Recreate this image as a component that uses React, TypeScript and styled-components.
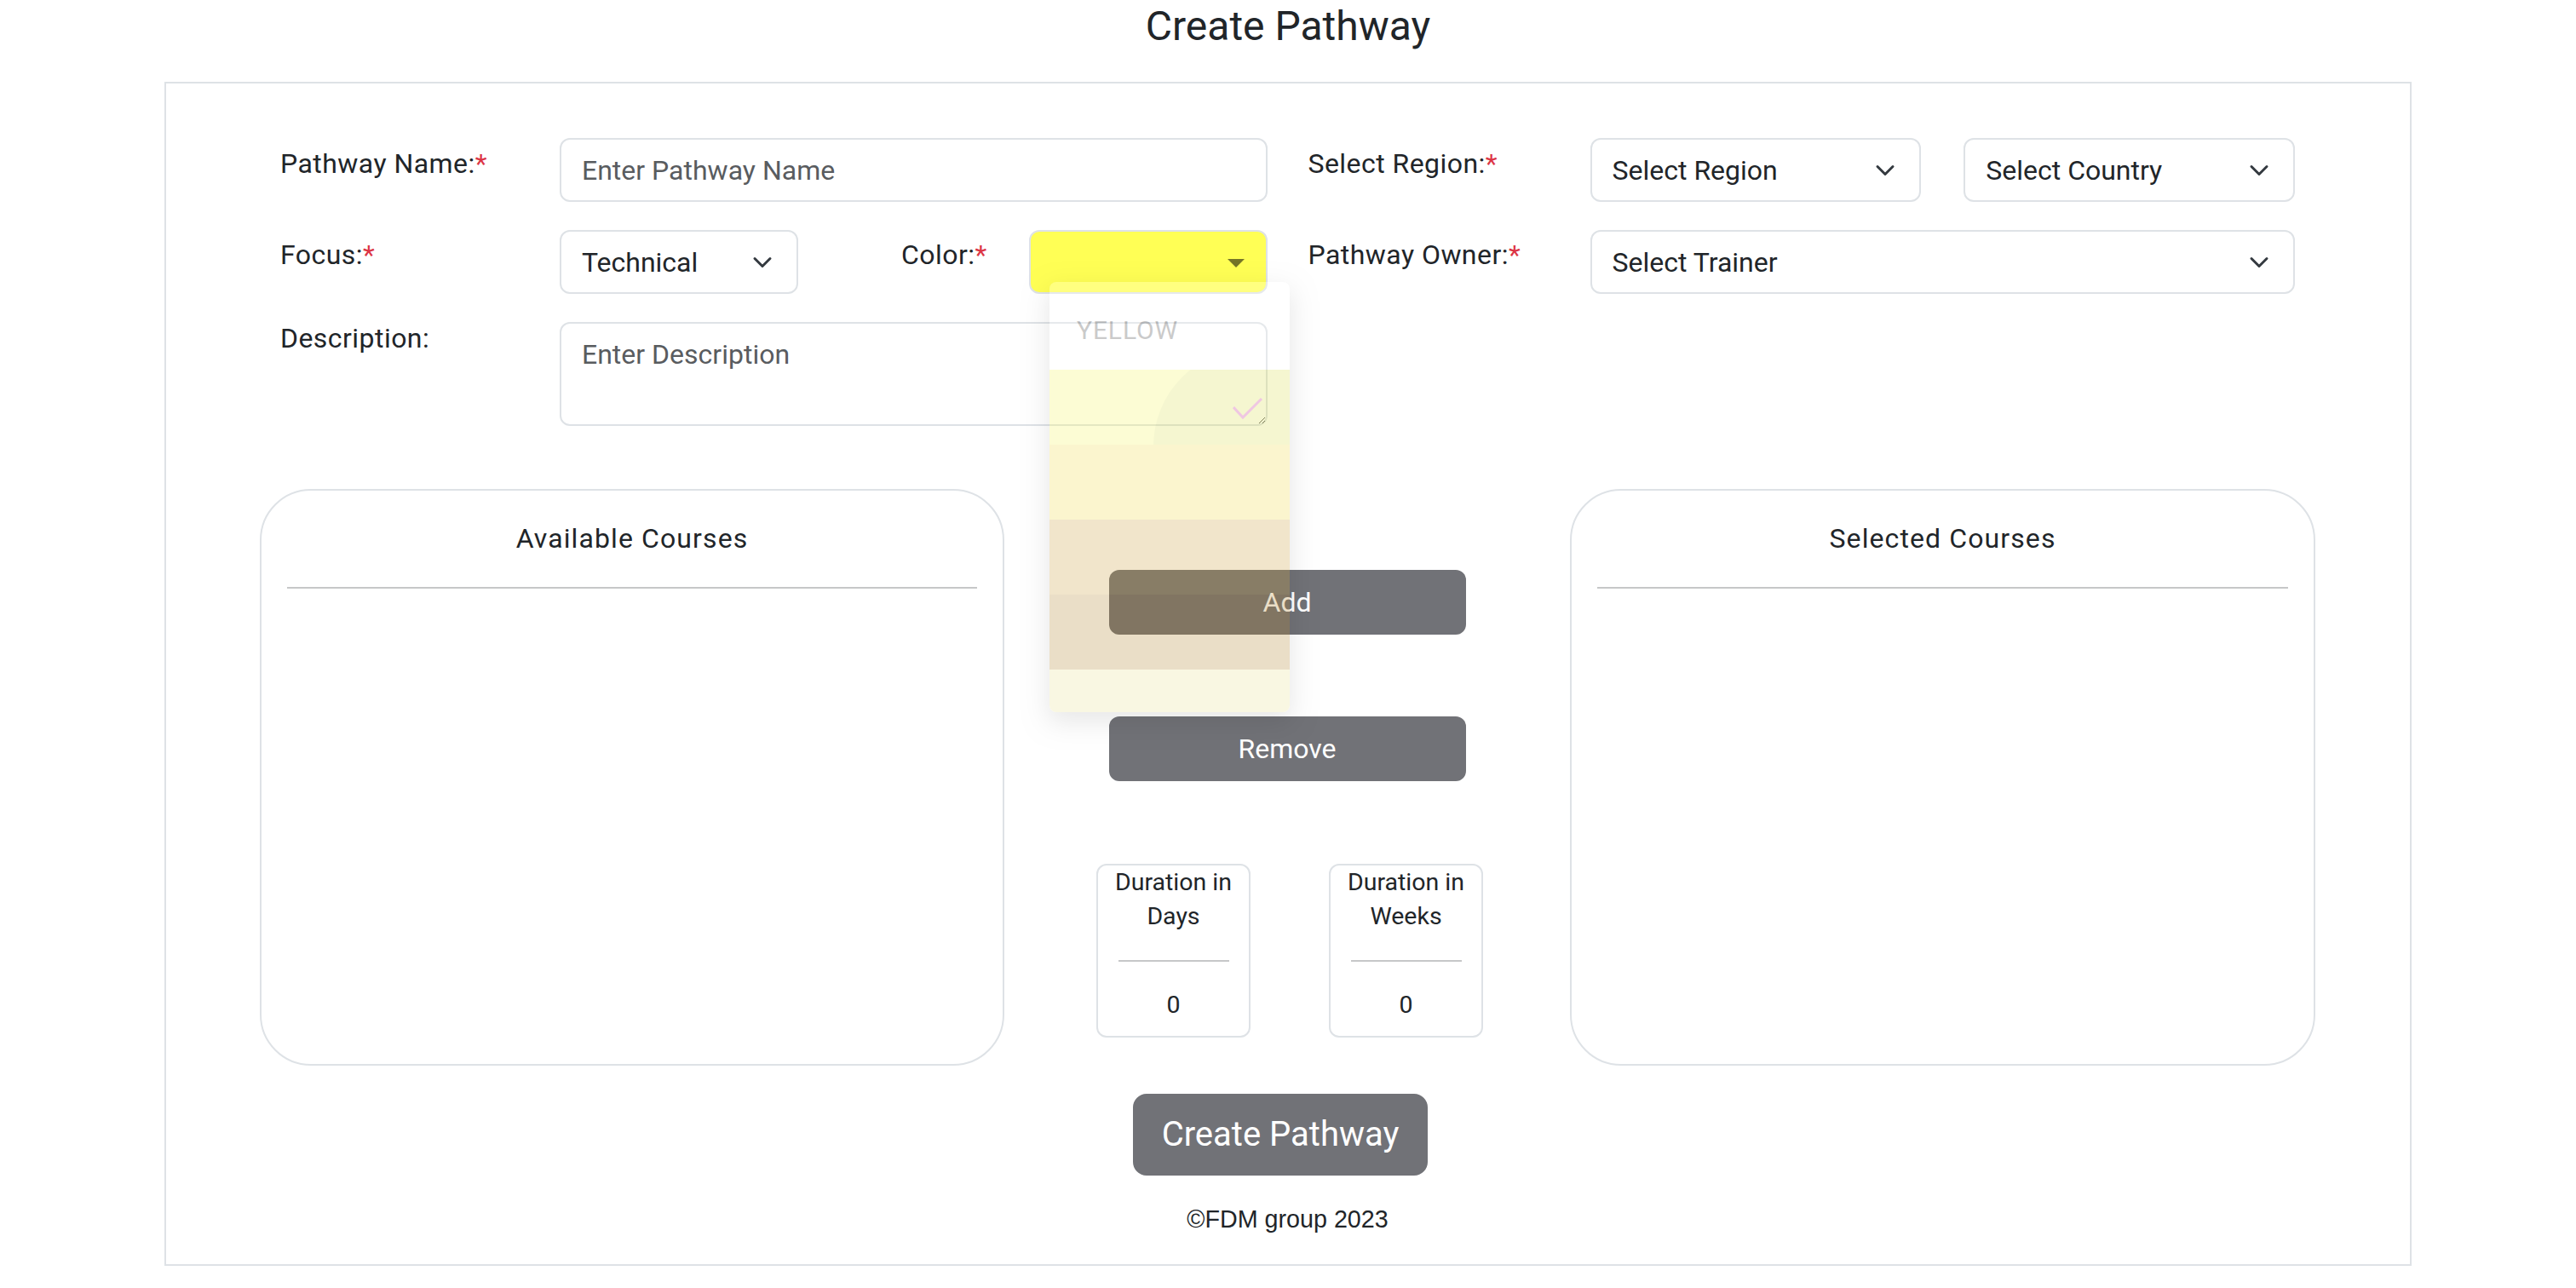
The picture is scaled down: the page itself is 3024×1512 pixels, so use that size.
import React from "react";
import styled, { createGlobalStyle } from "styled-components";

const GlobalStyle = createGlobalStyle`
  * { box-sizing: border-box; }
  html, body { margin: 0; padding: 0; background: #ffffff; }
  body {
    color: #212529;
    font-family: Roboto, "Liberation Sans", Arial, sans-serif;
  }
`;

const Page = styled.div`
  width: 3024px;
`;

const Title = styled.h1`
  margin: 2px 0 36px;
  font-size: 48px;
  line-height: 58px;
  font-weight: 400;
  text-align: center;
  color: #212529;
`;

const Card = styled.section`
  width: 2638px;
  margin: 0 auto;
  border: 2px solid #dee2e6;
  padding: 64px 135px 32px 134px;
  display: flex;
  flex-direction: column;
`;

const FormGrid = styled.div`
  display: grid;
  grid-template-columns: 1fr 1fr;
  column-gap: 48px;
  align-items: start;
`;

const FieldStack = styled.div`
  display: flex;
  flex-direction: column;
  gap: 33px;
`;

const FieldRow = styled.div`
  display: flex;
  align-items: flex-start;
`;

const Label = styled.label<{ $w: number; $offset: number; $ml?: number }>`
  flex: none;
  width: ${(p) => p.$w}px;
  margin-top: ${(p) => p.$offset}px;
  margin-left: ${(p) => p.$ml ?? 0}px;
  font-size: 32px;
  line-height: 48px;
  letter-spacing: 0.45px;
  color: #212529;
`;

const Req = styled.span`
  color: #dc3545;
`;

const TextInput = styled.input`
  flex: 1;
  min-width: 0;
  height: 75px;
  border: 2px solid #dee2e6;
  border-radius: 12px;
  padding: 0 24px;
  font-family: Roboto, sans-serif;
  font-size: 32px;
  color: #212529;
  background: #fff;
  outline: none;
  &::placeholder {
    color: #595c5f;
    opacity: 1;
  }
`;

const TextArea = styled.textarea`
  flex: 1;
  min-width: 0;
  height: 122px;
  border: 2px solid #dee2e6;
  border-radius: 12px;
  padding: 12px 24px;
  font-family: Roboto, sans-serif;
  font-size: 32px;
  line-height: 48px;
  color: #212529;
  background: #fff;
  outline: none;
  resize: vertical;
  &::placeholder {
    color: #595c5f;
    opacity: 1;
  }
`;

const SelectBox = styled.div<{ $w?: number }>`
  flex: ${(p) => (p.$w ? "none" : "1")};
  width: ${(p) => (p.$w ? `${p.$w}px` : "auto")};
  min-width: 0;
  height: 75px;
  border: 2px solid #dee2e6;
  border-radius: 12px;
  padding: 0 24px;
  display: flex;
  align-items: center;
  justify-content: space-between;
  font-size: 32px;
  color: #212529;
  background: #fff;
`;

const Chevron = styled.svg`
  flex: none;
  width: 32px;
  height: 24px;
`;

const PairGrid = styled.div`
  flex: 1;
  display: grid;
  grid-template-columns: 1fr 1fr;
  column-gap: 50px;
`;

const ColorWrap = styled.div`
  flex: 1;
  position: relative;
`;

const ColorSelect = styled.div`
  height: 75px;
  border: 2px solid #dee2e6;
  border-radius: 12px;
  background: #ffff55;
  display: flex;
  align-items: center;
  justify-content: flex-end;
  padding-right: 23px;
`;

const Caret = styled.svg`
  width: 48px;
  height: 48px;
  margin-right: -12px;
`;

const Menu = styled.ul`
  position: absolute;
  left: 24px;
  top: 61px;
  width: 282px;
  height: 505px;
  margin: 0;
  padding: 16px 0 0;
  list-style: none;
  background: #fff;
  border-radius: 8px;
  overflow: hidden;
  opacity: 0.254;
  box-shadow: 0 10px 30px 2px rgba(0, 0, 0, 0.35);
  z-index: 5;
`;

const MenuItem = styled.li<{ $bg: string; $h?: number }>`
  position: relative;
  height: ${(p) => p.$h ?? 88}px;
  background: ${(p) => p.$bg};
  padding: 0 32px;
  display: flex;
  align-items: center;
  overflow: hidden;
  font-size: 30px;
  letter-spacing: 0.9px;
  color: #333;
`;

const ItemText = styled.span`
  margin-top: -6px;
`;

const Ripple = styled.span`
  position: absolute;
  left: 122px;
  top: -25px;
  width: 230px;
  height: 230px;
  border-radius: 50%;
  background: rgba(110, 130, 10, 0.2);
`;

const Check = styled.svg`
  position: absolute;
  left: 215px;
  top: 32px;
  width: 36px;
  height: 27px;
`;

const Transfer = styled.div`
  display: grid;
  grid-template-columns: 874px 1fr 875px;
  margin: 74px -24px 0;
`;

const CoursePanel = styled.div`
  height: 677px;
  border: 2px solid #dee2e6;
  border-radius: 60px;
  padding: 32px 30px 0;
  display: flex;
  flex-direction: column;
`;

const PanelTitle = styled.h5`
  margin: 0;
  font-size: 32px;
  line-height: 48px;
  font-weight: 400;
  letter-spacing: 1.1px;
  text-align: center;
  color: #212529;
`;

const Rule = styled.hr<{ $w?: number; $m: number }>`
  margin: ${(p) => p.$m}px auto;
  width: ${(p) => (p.$w ? `${p.$w}px` : "100%")};
  border: 0;
  border-top: 2px solid #c6c7c8;
  opacity: 1;
`;

const Middle = styled.div`
  display: flex;
  flex-direction: column;
  align-items: center;
  padding-top: 95px;
`;

const ActionButton = styled.button<{ $mt?: number }>`
  width: 419px;
  height: 76px;
  margin-top: ${(p) => p.$mt ?? 0}px;
  border: none;
  border-radius: 12px;
  background: #717277;
  color: #fff;
  font-family: Roboto, sans-serif;
  font-size: 32px;
`;

const DurationRow = styled.div`
  display: flex;
  gap: 92px;
  margin-top: 97px;
  margin-left: 6px;
`;

const DurationBox = styled.div`
  width: 181px;
  height: 204px;
  border: 2px solid #dee2e6;
  border-radius: 12px;
  padding: 0 12px;
  text-align: center;
  font-size: 28.5px;
  line-height: 40px;
  color: #212529;
`;

const DurationHead = styled.div``;

const DurationValue = styled.div``;

const SubmitButton = styled.button`
  align-self: center;
  margin: 33px 17px 0 0;
  padding: 16px 32px;
  border: 2px solid #717277;
  border-radius: 16px;
  background: #717277;
  color: #fff;
  font-family: Roboto, sans-serif;
  font-size: 40px;
  line-height: 60px;
`;

const Footer = styled.footer`
  margin-top: 30px;
  text-align: center;
  font-family: "Liberation Sans", Arial, sans-serif;
  font-size: 28.7px;
  line-height: 42px;
  color: #212529;
`;

const ChevronIcon = () => (
  <Chevron viewBox="0 0 16 16" fill="none">
    <path d="m2 5 6 6 6-6" stroke="#343a40" strokeWidth="2" strokeLinecap="round" strokeLinejoin="round" />
  </Chevron>
);

const Select = ({ children, w }: { children: React.ReactNode; w?: number }) => (
  <SelectBox $w={w}>
    <span>{children}</span>
    <ChevronIcon />
  </SelectBox>
);

const menuColors = ["#f7f75a", "#f3dc42", "#cc9d36", "#b08126", "#ebe091"];

export default function App() {
  return (
    <Page>
      <GlobalStyle />
      <Title>Create Pathway</Title>
      <Card>
        <FormGrid>
          <FieldStack>
            <FieldRow>
              <Label $w={328} $offset={6}>
                Pathway Name:<Req>*</Req>
              </Label>
              <TextInput placeholder="Enter Pathway Name" />
            </FieldRow>
            <FieldRow>
              <Label $w={328} $offset={5}>
                Focus:<Req>*</Req>
              </Label>
              <Select w={280}>Technical</Select>
              <Label $w={150} $offset={5} $ml={121}>
                Color:<Req>*</Req>
              </Label>
              <ColorWrap>
                <ColorSelect>
                  <Caret viewBox="0 0 24 24">
                    <path d="M7 10l5 5 5-5z" fill="rgba(0,0,0,0.54)" />
                  </Caret>
                </ColorSelect>
                <Menu>
                  <MenuItem $bg="#ffffff" $h={87}>
                    <ItemText>YELLOW</ItemText>
                  </MenuItem>
                  {menuColors.map((c, i) => (
                    <MenuItem key={c} $bg={c}>
                      {i === 0 && (
                        <>
                          <Ripple />
                          <Check viewBox="0 0 36 27" fill="none">
                            <path d="M1 12 L12 24 L34 2" stroke="#c4268f" strokeWidth="3" />
                          </Check>
                        </>
                      )}
                    </MenuItem>
                  ))}
                </Menu>
              </ColorWrap>
            </FieldRow>
            <FieldRow>
              <Label $w={328} $offset={-5}>
                Description:
              </Label>
              <TextArea placeholder="Enter Description" />
            </FieldRow>
          </FieldStack>
          <FieldStack>
            <FieldRow>
              <Label $w={331} $offset={6}>
                Select Region:<Req>*</Req>
              </Label>
              <PairGrid>
                <Select>Select Region</Select>
                <Select>Select Country</Select>
              </PairGrid>
            </FieldRow>
            <FieldRow>
              <Label $w={331} $offset={5}>
                Pathway Owner:<Req>*</Req>
              </Label>
              <Select>Select Trainer</Select>
            </FieldRow>
          </FieldStack>
        </FormGrid>

        <Transfer>
          <CoursePanel>
            <PanelTitle>Available Courses</PanelTitle>
            <Rule $m={33} />
          </CoursePanel>
          <Middle>
            <ActionButton>Add</ActionButton>
            <ActionButton $mt={96}>Remove</ActionButton>
            <DurationRow>
              <DurationBox>
                <DurationHead>Duration in Days</DurationHead>
                <Rule $w={130} $m={31} />
                <DurationValue>0</DurationValue>
              </DurationBox>
              <DurationBox>
                <DurationHead>Duration in Weeks</DurationHead>
                <Rule $w={130} $m={31} />
                <DurationValue>0</DurationValue>
              </DurationBox>
            </DurationRow>
          </Middle>
          <CoursePanel>
            <PanelTitle>Selected Courses</PanelTitle>
            <Rule $m={33} />
          </CoursePanel>
        </Transfer>

        <SubmitButton>Create Pathway</SubmitButton>
        <Footer>©FDM group 2023</Footer>
      </Card>
    </Page>
  );
}
